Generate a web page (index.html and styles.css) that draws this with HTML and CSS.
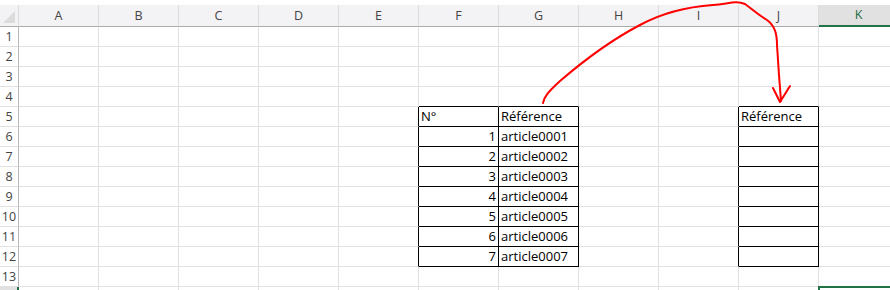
FILE: index.html
```html
<!DOCTYPE html>
<html lang="fr">
<head>
<meta charset="utf-8">
<title>Feuille</title>
<link rel="stylesheet" href="styles.css">
</head>
<body>
<div class="sheet">
<table class="grid">
<colgroup>
<col class="c-rh"><col class="c"><col class="c"><col class="c"><col class="c"><col class="c"><col class="c"><col class="c"><col class="c"><col class="c"><col class="c"><col class="c">
</colgroup>
<thead>
<tr class="hdr">
<th class="corner"><span class="tri"></span></th>
<th>A</th><th>B</th><th>C</th><th>D</th><th>E</th><th>F</th><th>G</th><th>H</th><th>I</th><th>J</th><th class="sel-col">K</th>
</tr>
</thead>
<tbody>
<tr><th class="rh">1</th><td></td><td></td><td></td><td></td><td></td><td></td><td></td><td></td><td></td><td></td><td></td></tr>
<tr><th class="rh">2</th><td></td><td></td><td></td><td></td><td></td><td></td><td></td><td></td><td></td><td></td><td></td></tr>
<tr><th class="rh">3</th><td></td><td></td><td></td><td></td><td></td><td></td><td></td><td></td><td></td><td></td><td></td></tr>
<tr><th class="rh">4</th><td></td><td></td><td></td><td></td><td></td><td class="bt"></td><td class="bt"></td><td></td><td></td><td class="bt"></td><td></td></tr>
<tr><th class="rh">5</th><td></td><td></td><td></td><td></td><td class="bl"></td><td class="b">N°</td><td class="b">Référence</td><td></td><td class="bl"></td><td class="b">Référence</td><td></td></tr>
<tr><th class="rh">6</th><td></td><td></td><td></td><td></td><td class="bl"></td><td class="b num">1</td><td class="b">article0001</td><td></td><td class="bl"></td><td class="b"></td><td></td></tr>
<tr><th class="rh">7</th><td></td><td></td><td></td><td></td><td class="bl"></td><td class="b num">2</td><td class="b">article0002</td><td></td><td class="bl"></td><td class="b"></td><td></td></tr>
<tr><th class="rh">8</th><td></td><td></td><td></td><td></td><td class="bl"></td><td class="b num">3</td><td class="b">article0003</td><td></td><td class="bl"></td><td class="b"></td><td></td></tr>
<tr><th class="rh">9</th><td></td><td></td><td></td><td></td><td class="bl"></td><td class="b num">4</td><td class="b">article0004</td><td></td><td class="bl"></td><td class="b"></td><td></td></tr>
<tr><th class="rh">10</th><td></td><td></td><td></td><td></td><td class="bl"></td><td class="b num">5</td><td class="b">article0005</td><td></td><td class="bl"></td><td class="b"></td><td></td></tr>
<tr><th class="rh">11</th><td></td><td></td><td></td><td></td><td class="bl"></td><td class="b num">6</td><td class="b">article0006</td><td></td><td class="bl"></td><td class="b"></td><td></td></tr>
<tr><th class="rh">12</th><td></td><td></td><td></td><td></td><td class="bl"></td><td class="b num">7</td><td class="b">article0007</td><td></td><td class="bl"></td><td class="b"></td><td></td></tr>
<tr><th class="rh">13</th><td></td><td></td><td></td><td></td><td></td><td></td><td></td><td></td><td></td><td></td><td></td></tr>
<tr><th class="rh sel-row"></th><td></td><td></td><td></td><td></td><td></td><td></td><td></td><td></td><td></td><td></td><td class="sel-cell"></td></tr>
</tbody>
</table>
<svg class="arrow" width="890" height="290" viewBox="0 0 890 290" aria-hidden="true">
<path d="M543,103 C544,97 548,92 560,81 C588,57 615,38 640,25 C662,13 685,7 713,5 C728,4 736,0 745,4 C752,9 757,14 767,20 C775,26 777,34 777,45 L779,75 L781,101" fill="none" stroke="#ff0000" stroke-width="2" stroke-linecap="round" stroke-linejoin="round"/>
<path d="M773,88 L780,102 L790,86" fill="none" stroke="#ff0000" stroke-width="2" stroke-linecap="round" stroke-linejoin="round"/>
</svg>
</div>
</body>
</html>
```
FILE: styles.css
```css
html, body {
  margin: 0;
  padding: 0;
  background: #ffffff;
  overflow: hidden;
}

.sheet {
  position: relative;
  width: 890px;
  height: 290px;
  padding-top: 5px;
  box-sizing: border-box;
  overflow: hidden;
}

.grid {
  border-collapse: separate;
  border-spacing: 0;
  table-layout: fixed;
  width: 899px;
  font-family: "Open Sans", "Liberation Sans", sans-serif;
}

.c-rh { width: 19px; }
.c { width: 80px; }

.hdr { height: 22px; }

.hdr th {
  background: #f3f2f4;
  color: #444444;
  font-weight: normal;
  font-size: 12.5px;
  line-height: 14px;
  padding: 0;
  text-align: center;
  vertical-align: middle;
  border-right: 1px solid #dcdcdc;
  border-bottom: 1px solid #ababab;
}

.hdr th.corner {
  position: relative;
  border-right: 1px solid #dcdcdc;
}

.tri {
  position: absolute;
  right: 3px;
  bottom: 3px;
  width: 0;
  height: 0;
  border-left: 12px solid transparent;
  border-bottom: 12px solid #dcdcdc;
}

.hdr th.sel-col {
  background: #e1e1e1;
  color: #1e6b41;
  border-bottom: 2px solid #217346;
}

tbody tr { height: 20px; }

.rh {
  background: #ffffff;
  color: #444444;
  font-weight: normal;
  font-size: 12.5px;
  line-height: 14px;
  padding: 0;
  text-align: center;
  vertical-align: middle;
  border-right: 1px solid #b8b8b8;
  border-bottom: 1px solid #e1e1e1;
}

.rh.sel-row {
  background: #e1e1e1;
  border-right: 2px solid #217346;
}

td {
  background: #ffffff;
  color: #000000;
  font-size: 13px;
  line-height: 16px;
  padding: 0 2px 2px 2px;
  vertical-align: bottom;
  white-space: nowrap;
  overflow: hidden;
  border-right: 1px solid #e1e1e1;
  border-bottom: 1px solid #e1e1e1;
}

td.num { text-align: right; }

td.b {
  border-right: 1px solid #000000;
  border-bottom: 1px solid #000000;
}

td.bl { border-right: 1px solid #000000; }
td.bt { border-bottom: 1px solid #000000; }

td.sel-cell {
  outline: 2px solid #217346;
  outline-offset: -1px;
}

.arrow {
  position: absolute;
  left: 0;
  top: 0;
  pointer-events: none;
}
```
